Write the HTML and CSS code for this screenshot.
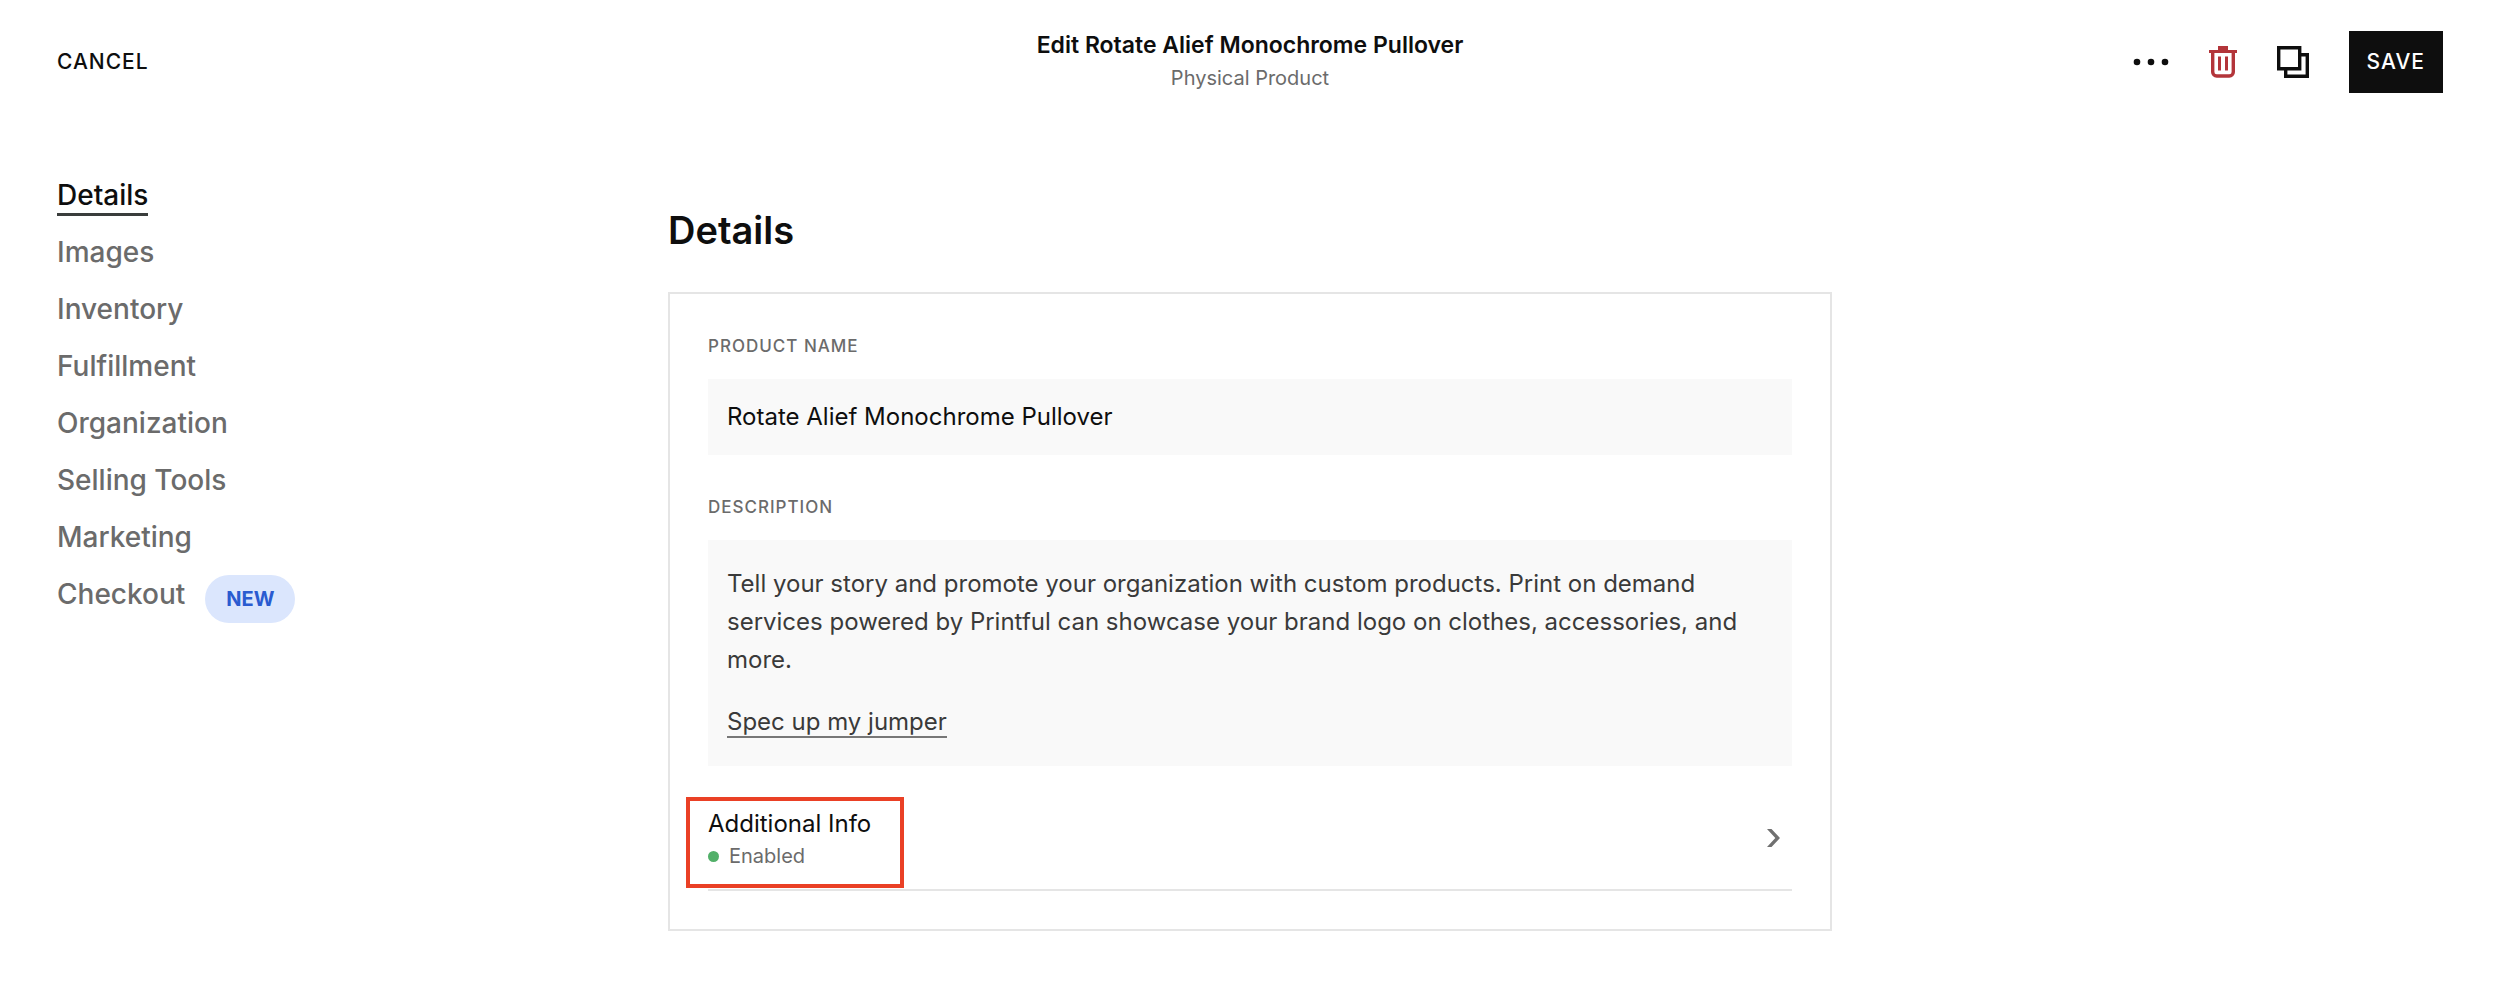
FILE: index.html
```html
<!DOCTYPE html>
<html lang="en">
<head>
    <meta charset="UTF-8">
    <meta name="viewport" content="width=device-width, initial-scale=1.0">
    <title>Edit Rotate Alief Monochrome Pullover</title>
    <link rel="stylesheet" href="styles.css">
</head>
<body>
    <header class="topbar">
        <div class="topbar-left">
            <button type="button" class="cancel">CANCEL</button>
        </div>
        <div class="topbar-title">
            <h1>Edit Rotate Alief Monochrome Pullover</h1>
            <p>Physical Product</p>
        </div>
        <div class="topbar-actions">
            <button type="button" class="icon-button" aria-label="More">
                <svg width="36" height="36" viewBox="0 0 36 36" fill="#0e0e0e">
                    <circle cx="4" cy="18" r="3.3"/>
                    <circle cx="18" cy="18" r="3.3"/>
                    <circle cx="32" cy="18" r="3.3"/>
                </svg>
            </button>
            <button type="button" class="icon-button" aria-label="Delete">
                <svg width="28" height="32" viewBox="0 0 28 32" fill="#b3353a">
                    <path d="M9 0h10v4h9v3H0V4h9z"/>
                    <path d="M3.700 6v20a4 4 0 0 0 4 4h12.600a4 4 0 0 0 4-4V6" fill="none" stroke="#b3353a" stroke-width="3.4"/>
                    <path d="M9 10.500h3v14H9zM16 10.500h3v14h-3z"/>
                </svg>
            </button>
            <button type="button" class="icon-button" aria-label="Duplicate">
                <svg width="32" height="32" viewBox="0 0 32 32" fill="none" stroke="#0e0e0e" stroke-width="3.400">
                    <path d="M1.700 1.700h21v21h-21z"/>
                    <path d="M24 8.700h6.300v21.600h-21.600V24"/>
                </svg>
            </button>
            <button type="button" class="save">SAVE</button>
        </div>
    </header>

    <main class="layout">
        <nav class="sidebar">
            <a href="#details" class="active"><span>Details</span></a>
            <a href="#images">Images</a>
            <a href="#inventory">Inventory</a>
            <a href="#fulfillment">Fulfillment</a>
            <a href="#organization">Organization</a>
            <a href="#selling-tools">Selling Tools</a>
            <a href="#marketing">Marketing</a>
            <a href="#checkout">Checkout <span class="badge">NEW</span></a>
        </nav>

        <section class="content" id="details">
            <h2>Details</h2>
            <div class="card">
                <div class="form-group">
                    <label class="label" for="productName">PRODUCT NAME</label>
                    <input type="text" id="productName" class="field" value="Rotate Alief Monochrome Pullover">
                </div>
                <div class="form-group">
                    <div class="label" id="descriptionLabel">DESCRIPTION</div>
                    <div class="field description" contenteditable="true" role="textbox" aria-multiline="true" aria-labelledby="descriptionLabel" spellcheck="false">
                        <p>Tell your story and promote your organization with custom products. Print on demand services powered by Printful can showcase your brand logo on clothes, accessories, and more.</p>
                        <p><a href="#jumper">Spec up my jumper</a></p>
                    </div>
                </div>
                <button type="button" class="info-row">
                    <span class="info-text">
                        <span class="info-title">Additional Info</span>
                        <span class="info-status">Enabled</span>
                    </span>
                    <svg class="chevron" width="13" height="22" viewBox="0 0 13 22" fill="#707070">
                        <path d="M0 0h4.500l8.500 9-8.500 9H0l8.300-9z"/>
                    </svg>
                </button>
            </div>
        </section>
    </main>
</body>
</html>
```

FILE: styles.css
```css
* {
    box-sizing: border-box;
}
body {
    margin: 0;
    font-family: Inter, "Liberation Sans", Arial, sans-serif;
    font-size: 24px;
    color: #0e0e0e;
    background-color: #fff;
}
h1, h2, p {
    margin: 0;
}
button {
    padding: 0;
    border: none;
    background: none;
    color: inherit;
    font-family: inherit;
    cursor: pointer;
}
svg {
    display: block;
}

/* Top bar */
.topbar {
    display: grid;
    grid-template-columns: 1fr auto 1fr;
    align-items: center;
    padding: 29px 57px 28px;
}
.topbar-left {
    display: flex;
}
.cancel, .save {
    font-size: 21px;
    font-weight: 500;
    letter-spacing: 1px;
}
.topbar-title {
    text-align: center;
}
.topbar-title h1 {
    font-size: 23px;
    font-weight: 600;
    line-height: 33px;
}
.topbar-title p {
    font-size: 20px;
    line-height: 32px;
    color: #6b6b6b;
}
.topbar-actions {
    display: flex;
    justify-content: flex-end;
    align-items: center;
    gap: 40px;
}
.save {
    padding: 20px 18px;
    line-height: 22px;
    color: #fff;
    background-color: #0e0e0e;
}

/* Page layout */
.layout {
    display: grid;
    grid-template-columns: 1fr minmax(0, 1164px) 1fr;
    padding: 0 57px;
}
.sidebar {
    display: flex;
    flex-direction: column;
    padding-top: 44px;
}
.sidebar a {
    display: flex;
    align-items: center;
    gap: 20px;
    height: 57px;
    font-size: 28px;
    font-weight: 500;
    line-height: 36px;
    color: #6b6b6b;
    text-decoration: none;
}
.sidebar .active {
    color: #0e0e0e;
}
.active span {
    box-shadow: 0 3px #3a3d3c;
}
.badge {
    margin-top: 10px;
    padding: 6px 21px;
    border-radius: 24px;
    font-size: 20px;
    font-weight: 700;
    color: #2a5bd0;
    background-color: #dbe6fd;
}

/* Details form */
.content {
    padding-top: 84px;
}
h2 {
    margin-bottom: 38px;
    font-size: 38px;
    font-weight: 600;
    line-height: 48px;
}
.card {
    padding: 38px;
    border: 2px solid #e5e5e5;
}
.form-group + .form-group {
    margin-top: 38px;
}
.label {
    display: block;
    margin-bottom: 19px;
    font-size: 17px;
    font-weight: 500;
    line-height: 28px;
    letter-spacing: 1px;
    color: #6b6b6b;
}
.field {
    display: block;
    width: 100%;
    padding: 19px;
    border: none;
    font-family: inherit;
    font-size: 24px;
    line-height: 38px;
    color: #0e0e0e;
    background-color: #f9f9f9;
}
.description {
    padding: 25px 19px;
    color: #3a3a3a;
}
.description p + p {
    margin-top: 24px;
}
.description a {
    color: inherit;
    text-decoration: none;
    border-bottom: 2px solid #777;
}
.info-row {
    display: flex;
    justify-content: space-between;
    align-items: center;
    width: 100%;
    padding: 42px 12px 17px 0;
    border-bottom: 2px solid #e5e5e5;
    text-align: left;
}
.info-text {
    position: relative;
    display: flex;
    flex-direction: column;
}
/* highlight frame around the row's text */
.info-text::after {
    content: "";
    position: absolute;
    top: -11px;
    right: -33px;
    bottom: -16px;
    left: -22px;
    border: 4px solid #ea4025;
}
.info-title {
    font-size: 24px;
    line-height: 32px;
}
.info-status {
    display: flex;
    align-items: center;
    gap: 10px;
    font-size: 20px;
    line-height: 32px;
    color: #6b6b6b;
}
.info-status::before {
    content: "";
    width: 11px;
    height: 11px;
    border-radius: 50%;
    background-color: #52b069;
}
```
